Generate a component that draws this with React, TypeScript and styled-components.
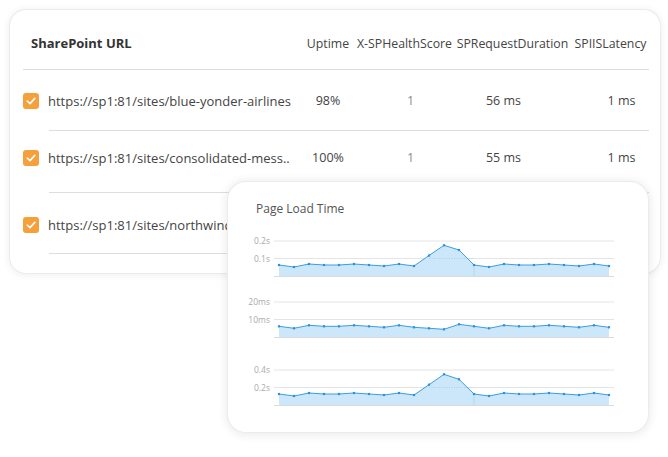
import styled, { createGlobalStyle } from "styled-components";

const GlobalStyle = createGlobalStyle`
  *, *::before, *::after {
    box-sizing: border-box;
  }
  html, body {
    margin: 0;
    padding: 0;
    background: #ffffff;
  }
  body {
    font-family: "Open Sans", "Noto Sans", sans-serif;
    color: #444;
  }
`;

const Page = styled.div`
  position: relative;
  width: 668px;
  height: 457px;
  padding: 10px 8px 0 10px;
  overflow: hidden;
`;

const TableCard = styled.div`
  width: 650px;
  height: 263px;
  padding: 0 11px 0 13px;
  border-radius: 16px;
  background: #fff;
  box-shadow: 0 0 0 1px #ebebeb, 0 1px 7px 2px rgba(0, 0, 0, 0.06);
`;

const Grid = styled.div`
  display: grid;
  grid-template-columns: 277px 56px 97px 119px 77px;
`;

const HeaderCell = styled.div<{ $bold?: boolean; $left?: boolean }>`
  height: 60px;
  padding-top: 7px;
  display: flex;
  align-items: center;
  justify-content: ${(p) => (p.$left ? "flex-start" : "center")};
  padding-left: ${(p) => (p.$left ? "8px" : "0")};
  border-bottom: 1px solid #dedede;
  font-size: ${(p) => (p.$bold ? "13px" : "12.3px")};
  font-weight: ${(p) => (p.$bold ? 700 : 400)};
  color: ${(p) => (p.$bold ? "#333" : "#444")};
  white-space: nowrap;
`;

// $dy moves the row content up (negative) or down (positive) inside its row
const UrlCell = styled.div<{ $h: number; $dy: number }>`
  height: ${(p) => p.$h}px;
  padding-top: ${(p) => Math.max(0, p.$dy * 2)}px;
  padding-bottom: ${(p) => Math.max(0, -p.$dy * 2)}px;
  display: flex;
  align-items: center;
  gap: 9px;
  white-space: nowrap;
  overflow: hidden;
  position: relative;
  font-size: 13px;
  color: #444;

  &::after {
    content: "";
    position: absolute;
    left: 26px;
    right: 0;
    bottom: 0;
    border-bottom: 1px solid #dedede;
  }
`;

const ValueCell = styled.div<{ $h: number; $dy: number; $shift?: number; $muted?: boolean }>`
  height: ${(p) => p.$h}px;
  display: flex;
  align-items: center;
  justify-content: center;
  padding: ${(p) => Math.max(0, p.$dy * 2)}px ${(p) => Math.max(0, -(p.$shift ?? 0) * 2)}px
    ${(p) => Math.max(0, -p.$dy * 2)}px ${(p) => Math.max(0, (p.$shift ?? 0) * 2)}px;
  border-bottom: 1px solid #dedede;
  font-size: 12.5px;
  color: ${(p) => (p.$muted ? "#8c8c8c" : "#444")};
  white-space: nowrap;
`;

const CheckBox = styled.span`
  width: 16px;
  height: 16px;
  flex: none;
  border-radius: 3px;
  background: #f6a03b;
  display: flex;
  align-items: center;
  justify-content: center;
`;

const ChartCard = styled.div`
  position: absolute;
  left: 228px;
  top: 182px;
  width: 420px;
  height: 250px;
  padding: 18px 0 0 8px;
  border-radius: 18px;
  background: #fff;
  box-shadow: 0 0 0 1px #ebebeb, 0 1px 8px 3px rgba(0, 0, 0, 0.07);
`;

const ChartTitle = styled.div`
  padding-left: 20px;
  font-size: 12px;
  color: #555;
  height: 18px;
  line-height: 18px;
`;

const ChartBox = styled.div<{ $top: number }>`
  margin-top: ${(p) => p.$top}px;
  height: 46px;
  svg {
    display: block;
  }
`;

const Check = () => (
  <svg width="10" height="8" viewBox="0 0 10 8">
    <polyline points="1.2,4 4,6.6 8.8,1.4" fill="none" stroke="#fff" strokeWidth="1.6" strokeLinecap="round" strokeLinejoin="round" />
  </svg>
);

type Row = { url: string; uptime: string; health: string; duration: string; latency: string; h: number; dy: number };

const rows: Row[] = [
  { url: "https://sp1:81/sites/blue-yonder-airlines", uptime: "98%", health: "1", duration: "56 ms", latency: "1 ms", h: 61, dy: 0 },
  { url: "https://sp1:81/sites/consolidated-mess..", uptime: "100%", health: "1", duration: "55 ms", latency: "1 ms", h: 62, dy: -4 },
  { url: "https://sp1:81/sites/northwind-traders", uptime: "99%", health: "1", duration: "54 ms", latency: "1 ms", h: 61, dy: 1.5 },
];

type Chart = { labels: [string, string]; values: number[]; spike: boolean; top: number };

const spikeData = [11, 9, 12, 11, 11, 12, 11, 10, 12, 10, 20.5, 30.7, 26, 11, 9, 12, 11, 11, 12, 11, 10, 12, 10];
const flatData = [10.7, 8.7, 11.7, 10.7, 10.7, 11.7, 10.7, 9.7, 11.7, 9.7, 8.7, 7.7, 12.7, 10.7, 8.7, 11.7, 10.7, 10.7, 11.7, 10.7, 9.7, 11.7, 9.7];

const charts: Chart[] = [
  { labels: ["0.2s", "0.1s"], values: spikeData, spike: true, top: 17 },
  { labels: ["20ms", "10ms"], values: flatData, spike: false, top: 15 },
  { labels: ["0.4s", "0.2s"], values: spikeData.map((v, i) => (i === 10 ? 20.3 : i === 12 ? 25.7 : v)), spike: true, top: 22 },
];

function MiniChart({ chart }: { chart: Chart }) {
  const base = 41;
  const x0 = 43;
  const step = 15;
  const pts = chart.values.map((v, i) => [x0 + i * step, base - v] as const);
  const line = pts.map(([x, y]) => `${x},${y}`).join(" ");
  const area = `${x0},${base} ${line} ${x0 + (pts.length - 1) * step},${base}`;
  return (
    <svg width="392" height="46" viewBox="0 0 392 46">
      <line x1="38" x2="378" y1="6" y2="6" stroke="#e4e4e4" strokeWidth="1" />
      <line x1="38" x2="378" y1="23.5" y2="23.5" stroke="#e4e4e4" strokeWidth="1" />
      <text x="34" y="9" textAnchor="end" fontSize="8.5" fill="#aaa" fontFamily="Open Sans, sans-serif">
        {chart.labels[0]}
      </text>
      <text x="34" y="26.5" textAnchor="end" fontSize="8.5" fill="#aaa" fontFamily="Open Sans, sans-serif">
        {chart.labels[1]}
      </text>
      <polygon points={area} fill="#cce7f9" />
      {chart.spike && (
        <>
          <line x1="193" x2="238" y1="23.5" y2="23.5" stroke="#9ccbee" strokeWidth="0.8" strokeDasharray="1 1.5" />
          <line x1="238" x2="238" y1={pts[13][1]} y2={base} stroke="#a9d3f0" strokeWidth="0.8" />
        </>
      )}
      <polyline points={line} fill="none" stroke="#3c9de2" strokeWidth="1" />
      {pts.map(([x, y], i) => (
        <rect key={i} x={x - 1.1} y={y - 1.1} width="2.2" height="2.2" fill="#2f8fd8" />
      ))}
      <line x1="38" x2="378" y1={base + 0.5} y2={base + 0.5} stroke="#dadada" strokeWidth="1" />
    </svg>
  );
}

export default function App() {
  return (
    <>
      <GlobalStyle />
      <Page>
        <TableCard>
          <Grid>
            <HeaderCell $bold $left>SharePoint URL</HeaderCell>
            <HeaderCell>Uptime</HeaderCell>
            <HeaderCell>X-SPHealthScore</HeaderCell>
            <HeaderCell>SPRequestDuration</HeaderCell>
            <HeaderCell>SPIISLatency</HeaderCell>
            {rows.map((r) => (
              <>
                <UrlCell key={r.url} $h={r.h} $dy={r.dy}>
                  <CheckBox>
                    <Check />
                  </CheckBox>
                  {r.url}
                </UrlCell>
                <ValueCell $h={r.h} $dy={r.dy}>
                  {r.uptime}
                </ValueCell>
                <ValueCell $h={r.h} $dy={r.dy} $shift={6} $muted>
                  {r.health}
                </ValueCell>
                <ValueCell $h={r.h} $dy={r.dy} $shift={-9}>
                  {r.duration}
                </ValueCell>
                <ValueCell $h={r.h} $dy={r.dy} $shift={11}>
                  {r.latency}
                </ValueCell>
              </>
            ))}
          </Grid>
        </TableCard>

        <ChartCard>
          <ChartTitle>Page Load Time</ChartTitle>
          {charts.map((c, i) => (
            <ChartBox key={i} $top={c.top}>
              <MiniChart chart={c} />
            </ChartBox>
          ))}
        </ChartCard>
      </Page>
    </>
  );
}
